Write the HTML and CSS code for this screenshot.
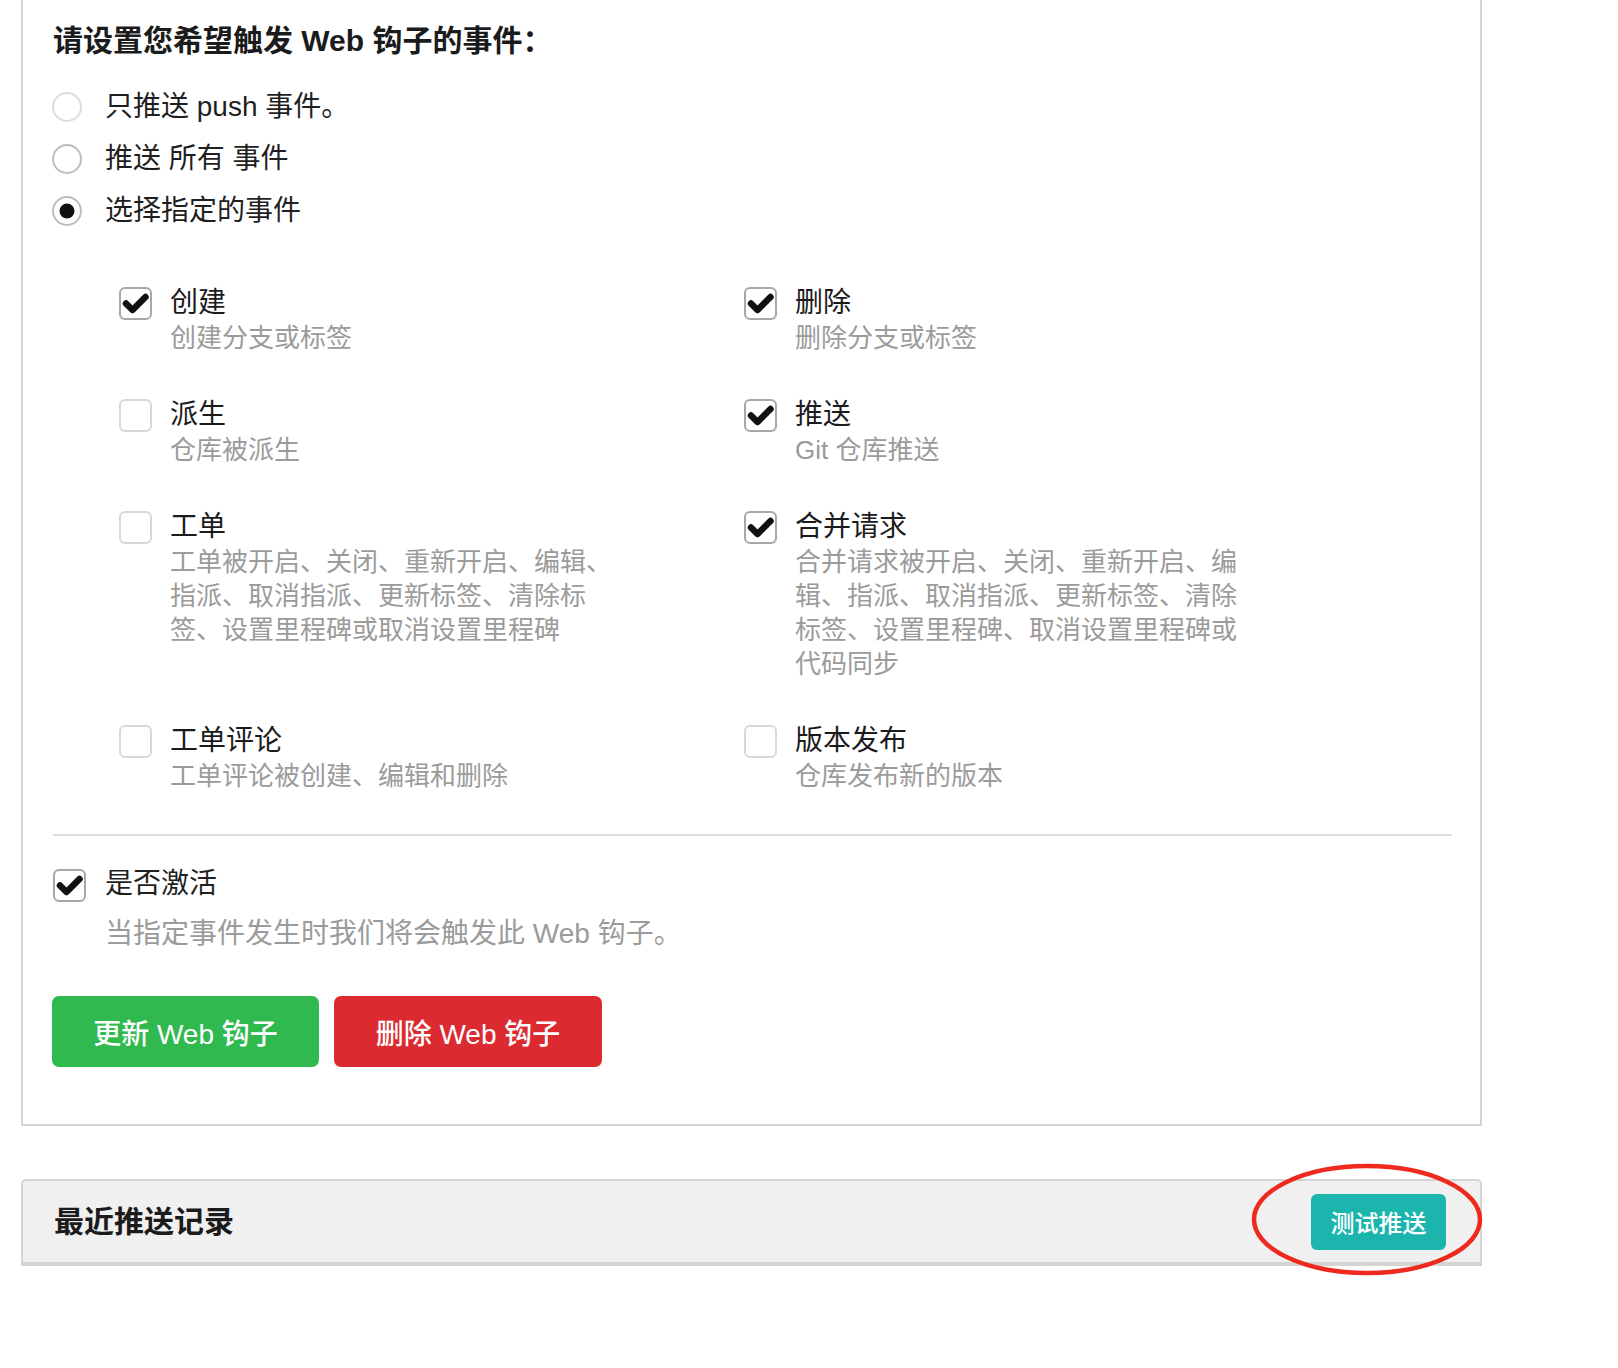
FILE: index.html
```html
<!DOCTYPE html>
<html lang="zh-CN">
<head>
<meta charset="utf-8">
<title>Web 钩子</title>
<link rel="stylesheet" href="styles.css">
</head>
<body>
<div class="segment">
  <h4 class="heading">请设置您希望触发 Web 钩子的事件：</h4>
  <div class="radios">
    <label class="radio"><svg class="circle" width="30" height="30" viewBox="0 0 30 30"><circle cx="15" cy="15" r="14" fill="#fff" stroke="#dcdcdc" stroke-width="2"/></svg><span>只推送 push 事件。</span></label>
    <label class="radio"><svg class="circle" width="30" height="30" viewBox="0 0 30 30"><circle cx="15" cy="15" r="14" fill="#fff" stroke="#bdbdbd" stroke-width="2"/></svg><span>推送 所有 事件</span></label>
    <label class="radio"><svg class="circle" width="30" height="30" viewBox="0 0 30 30"><circle cx="15" cy="15" r="14" fill="#fff" stroke="#bdbdbd" stroke-width="2"/><circle cx="15" cy="15" r="7.5" fill="#111"/></svg><span>选择指定的事件</span></label>
  </div>

  <div class="events">
    <div class="event">
      <svg class="box" width="33" height="33" viewBox="0 0 33 33"><rect x="1" y="1" width="31" height="31" rx="5" fill="#fff" stroke="#a8a8a8" stroke-width="2"/><path d="M7 16.5 L13.5 23 L26.5 10" fill="none" stroke="#111" stroke-width="6.5" stroke-linecap="round" stroke-linejoin="round"/></svg>
      <div class="text"><div class="title">创建</div><div class="desc">创建分支或标签</div></div>
    </div>
    <div class="event">
      <svg class="box" width="33" height="33" viewBox="0 0 33 33"><rect x="1" y="1" width="31" height="31" rx="5" fill="#fff" stroke="#a8a8a8" stroke-width="2"/><path d="M7 16.5 L13.5 23 L26.5 10" fill="none" stroke="#111" stroke-width="6.5" stroke-linecap="round" stroke-linejoin="round"/></svg>
      <div class="text"><div class="title">删除</div><div class="desc">删除分支或标签</div></div>
    </div>
    <div class="event">
      <svg class="box" width="33" height="33" viewBox="0 0 33 33"><rect x="1" y="1" width="31" height="31" rx="5" fill="#fff" stroke="#d8d8d8" stroke-width="2"/></svg>
      <div class="text"><div class="title">派生</div><div class="desc">仓库被派生</div></div>
    </div>
    <div class="event">
      <svg class="box" width="33" height="33" viewBox="0 0 33 33"><rect x="1" y="1" width="31" height="31" rx="5" fill="#fff" stroke="#a8a8a8" stroke-width="2"/><path d="M7 16.5 L13.5 23 L26.5 10" fill="none" stroke="#111" stroke-width="6.5" stroke-linecap="round" stroke-linejoin="round"/></svg>
      <div class="text"><div class="title">推送</div><div class="desc">Git 仓库推送</div></div>
    </div>
    <div class="event">
      <svg class="box" width="33" height="33" viewBox="0 0 33 33"><rect x="1" y="1" width="31" height="31" rx="5" fill="#fff" stroke="#d8d8d8" stroke-width="2"/></svg>
      <div class="text"><div class="title">工单</div><div class="desc">工单被开启、关闭、重新开启、编辑、指派、取消指派、更新标签、清除标签、设置里程碑或取消设置里程碑</div></div>
    </div>
    <div class="event">
      <svg class="box" width="33" height="33" viewBox="0 0 33 33"><rect x="1" y="1" width="31" height="31" rx="5" fill="#fff" stroke="#a8a8a8" stroke-width="2"/><path d="M7 16.5 L13.5 23 L26.5 10" fill="none" stroke="#111" stroke-width="6.5" stroke-linecap="round" stroke-linejoin="round"/></svg>
      <div class="text"><div class="title">合并请求</div><div class="desc">合并请求被开启、关闭、重新开启、编辑、指派、取消指派、更新标签、清除标签、设置里程碑、取消设置里程碑或代码同步</div></div>
    </div>
    <div class="event">
      <svg class="box" width="33" height="33" viewBox="0 0 33 33"><rect x="1" y="1" width="31" height="31" rx="5" fill="#fff" stroke="#d8d8d8" stroke-width="2"/></svg>
      <div class="text"><div class="title">工单评论</div><div class="desc">工单评论被创建、编辑和删除</div></div>
    </div>
    <div class="event">
      <svg class="box" width="33" height="33" viewBox="0 0 33 33"><rect x="1" y="1" width="31" height="31" rx="5" fill="#fff" stroke="#d8d8d8" stroke-width="2"/></svg>
      <div class="text"><div class="title">版本发布</div><div class="desc">仓库发布新的版本</div></div>
    </div>
  </div>

  <div class="divider"></div>

  <div class="active">
    <div class="active-row">
      <svg class="box" width="33" height="33" viewBox="0 0 33 33"><rect x="1" y="1" width="31" height="31" rx="5" fill="#fff" stroke="#a8a8a8" stroke-width="2"/><path d="M7 16.5 L13.5 23 L26.5 10" fill="none" stroke="#111" stroke-width="6.5" stroke-linecap="round" stroke-linejoin="round"/></svg>
      <span class="active-label">是否激活</span>
    </div>
    <div class="active-desc">当指定事件发生时我们将会触发此 Web 钩子。</div>
  </div>

  <div class="actions">
    <button class="btn green">更新 Web 钩子</button>
    <button class="btn red">删除 Web 钩子</button>
  </div>
</div>

<div class="panel">
  <h4 class="panel-title">最近推送记录</h4>
  <button class="btn teal">测试推送</button>
  <svg class="ring" width="232" height="113" viewBox="0 0 232 113"><ellipse cx="116" cy="56.5" rx="113" ry="53.5" fill="none" stroke="#ee2a1f" stroke-width="4.5"/></svg>
</div>
</body>
</html>
```

FILE: styles.css
```css
* { box-sizing: border-box; }

html, body {
  margin: 0;
  padding: 0;
  background: #fff;
}

body {
  font-family: "Liberation Sans", "Noto Sans CJK SC", sans-serif;
  color: #1f1f1f;
  min-height: 1368px;
}

.segment {
  margin-left: 21px;
  width: 1461px;
  border: 2px solid #d4d4d5;
  border-top: none;
  padding: 21px 28px 57px 30px;
}

.heading {
  margin: 0;
  font-size: 30px;
  line-height: 40px;
  font-weight: 700;
  color: #1b1b1b;
}

.radios {
  margin-top: 20px;
  display: flex;
  flex-direction: column;
}

.radio {
  height: 52px;
  display: flex;
  align-items: center;
  gap: 23px;
  font-size: 28px;
  line-height: 36px;
  margin-left: -1px;
}

.circle { flex: none; }

.events {
  margin-top: 48px;
  margin-left: 66px;
  display: grid;
  grid-template-columns: 625px 625px;
  row-gap: 42px;
}

.event {
  display: flex;
  align-items: flex-start;
  gap: 18px;
}

.box {
  flex: none;
  margin-top: 2px;
  display: block;
}

.title {
  font-size: 28px;
  line-height: 36px;
  color: #1b1b1b;
}

.desc {
  font-size: 26px;
  line-height: 34px;
  color: #9b9b9b;
  max-width: 456px;
}

.divider {
  margin-top: 41px;
  height: 2px;
  background: #dedede;
}

.active {
  margin-top: 30px;
}

.active-row {
  display: flex;
  align-items: center;
  gap: 19px;
}

.active-label {
  font-size: 28px;
  line-height: 36px;
}

.active-desc {
  margin-top: 14px;
  margin-left: 52px;
  font-size: 28px;
  line-height: 36px;
  color: #9b9b9b;
}

.actions {
  margin-top: 44px;
  display: flex;
  gap: 15px;
  margin-left: -1px;
}

.btn {
  font-family: inherit;
  border: none;
  color: #fff;
  cursor: pointer;
}

.green, .red {
  width: 267px;
  height: 71px;
  border-radius: 7px;
  font-size: 28px;
  font-weight: 500;
}

.green { background: #2fb94f; }
.red { background: #db2a30; width: 268px; }

.panel {
  position: relative;
  margin-top: 53px;
  margin-left: 21px;
  width: 1461px;
  height: 87px;
  background: #f0f0f0;
  border: 2px solid #d4d4d5;
  border-bottom-width: 4px;
  border-radius: 5px 5px 0 0;
  display: flex;
  align-items: center;
  justify-content: space-between;
  padding: 0 34px 0 31px;
}

.panel-title {
  margin: 0;
  font-size: 30px;
  line-height: 40px;
  font-weight: 700;
  color: #1b1b1b;
}

.teal {
  width: 135px;
  height: 56px;
  border-radius: 6px;
  background: #1cb5ae;
  font-size: 24px;
  font-weight: 500;
}

.ring {
  position: absolute;
  left: 1228px;
  top: -18px;
  pointer-events: none;
}
```
